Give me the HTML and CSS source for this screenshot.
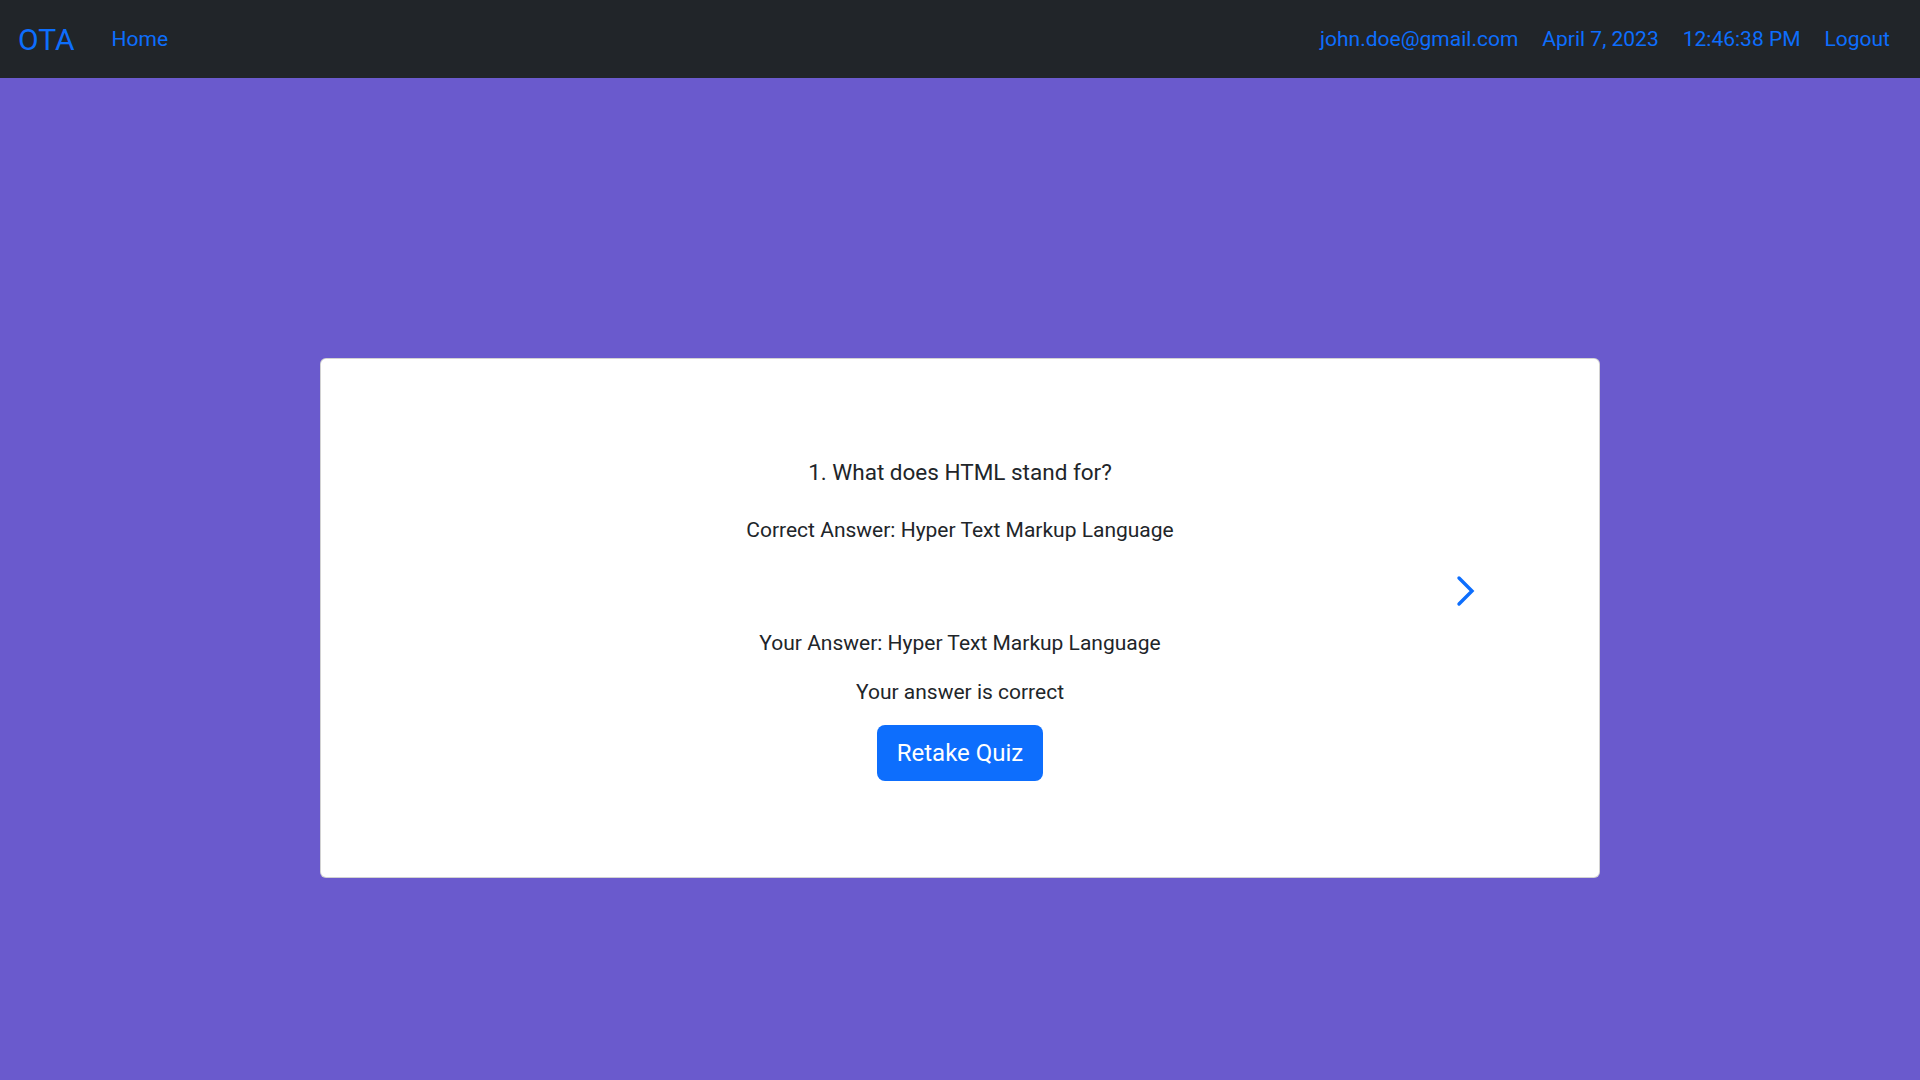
FILE: index.html
```html
<!DOCTYPE html>
<html lang="en">
<head>
<meta charset="utf-8">
<title>OTA Quiz Result</title>
<link rel="stylesheet" href="styles.css">
</head>
<body>
<nav class="navbar">
  <div class="nav-left">
    <a class="brand" href="#">OTA</a>
    <a class="nav-link" href="#">Home</a>
  </div>
  <div class="nav-right">
    <a class="nav-link" href="#">john.doe@gmail.com</a>
    <a class="nav-link" href="#">April 7, 2023</a>
    <a class="nav-link" href="#">12:46:38 PM</a>
    <a class="nav-link" href="#">Logout</a>
  </div>
</nav>
<main class="page">
  <div class="card">
    <div class="carousel">
      <p class="question">1. What does HTML stand for?</p>
      <p class="line correct">Correct Answer: Hyper Text Markup Language</p>
      <p class="line your">Your Answer: Hyper Text Markup Language</p>
      <p class="line verdict">Your answer is correct</p>
      <a class="next" href="#" aria-label="Next">
        <svg viewBox="0 0 20 32" width="20" height="32"><polyline points="3,3 16,16 3,29" fill="none" stroke="#0d6efd" stroke-width="3.4" stroke-linecap="round" stroke-linejoin="miter"/></svg>
      </a>
    </div>
    <button class="btn">Retake Quiz</button>
  </div>
</main>
</body>
</html>
```
FILE: styles.css
```css
* { box-sizing: border-box; }
html, body { margin: 0; padding: 0; }
body {
  font-family: Roboto, "Noto Sans", "Liberation Sans", sans-serif;
  color: #212529;
  background: #6a5acd;
}
a { text-decoration: none; color: #0d6efd; }
.navbar {
  height: 78px;
  background: #212529;
  display: flex;
  align-items: center;
  justify-content: space-between;
  padding: 2px 18px 0 18px;
}
.nav-left, .nav-right { display: flex; align-items: center; }
.brand {
  font-size: 30px;
  margin-right: 25px;
  line-height: 1;
}
.nav-link {
  font-size: 21px;
  padding: 0 12px;
  line-height: 1.5;
}
.page {
  min-height: 100vh;
  display: flex;
  align-items: center;
  justify-content: center;
}
.card {
  width: 1280px;
  height: 520px;
  background: #fff;
  border: 1px solid rgba(0,0,0,.175);
  border-radius: 6px;
  display: flex;
  flex-direction: column;
  align-items: center;
  padding-top: 96px;
}
.carousel {
  position: relative;
  width: 1190px;
  text-align: center;
}
.question {
  font-size: 22.5px;
  line-height: 34px;
  margin: 0 0 25px;
}
.line {
  font-size: 21px;
  line-height: 32px;
  margin: 0 0 17px;
}
.correct { margin-bottom: 81px; }
.next {
  position: absolute;
  right: 79px;
  top: 120px;
  display: block;
  width: 20px;
  height: 32px;
}
.next svg { display: block; }
.btn {
  font-family: inherit;
  font-size: 24px;
  line-height: 36px;
  padding: 10px 20px;
  color: #fff;
  background: #0d6efd;
  border: 0;
  border-radius: 8px;
}
```
